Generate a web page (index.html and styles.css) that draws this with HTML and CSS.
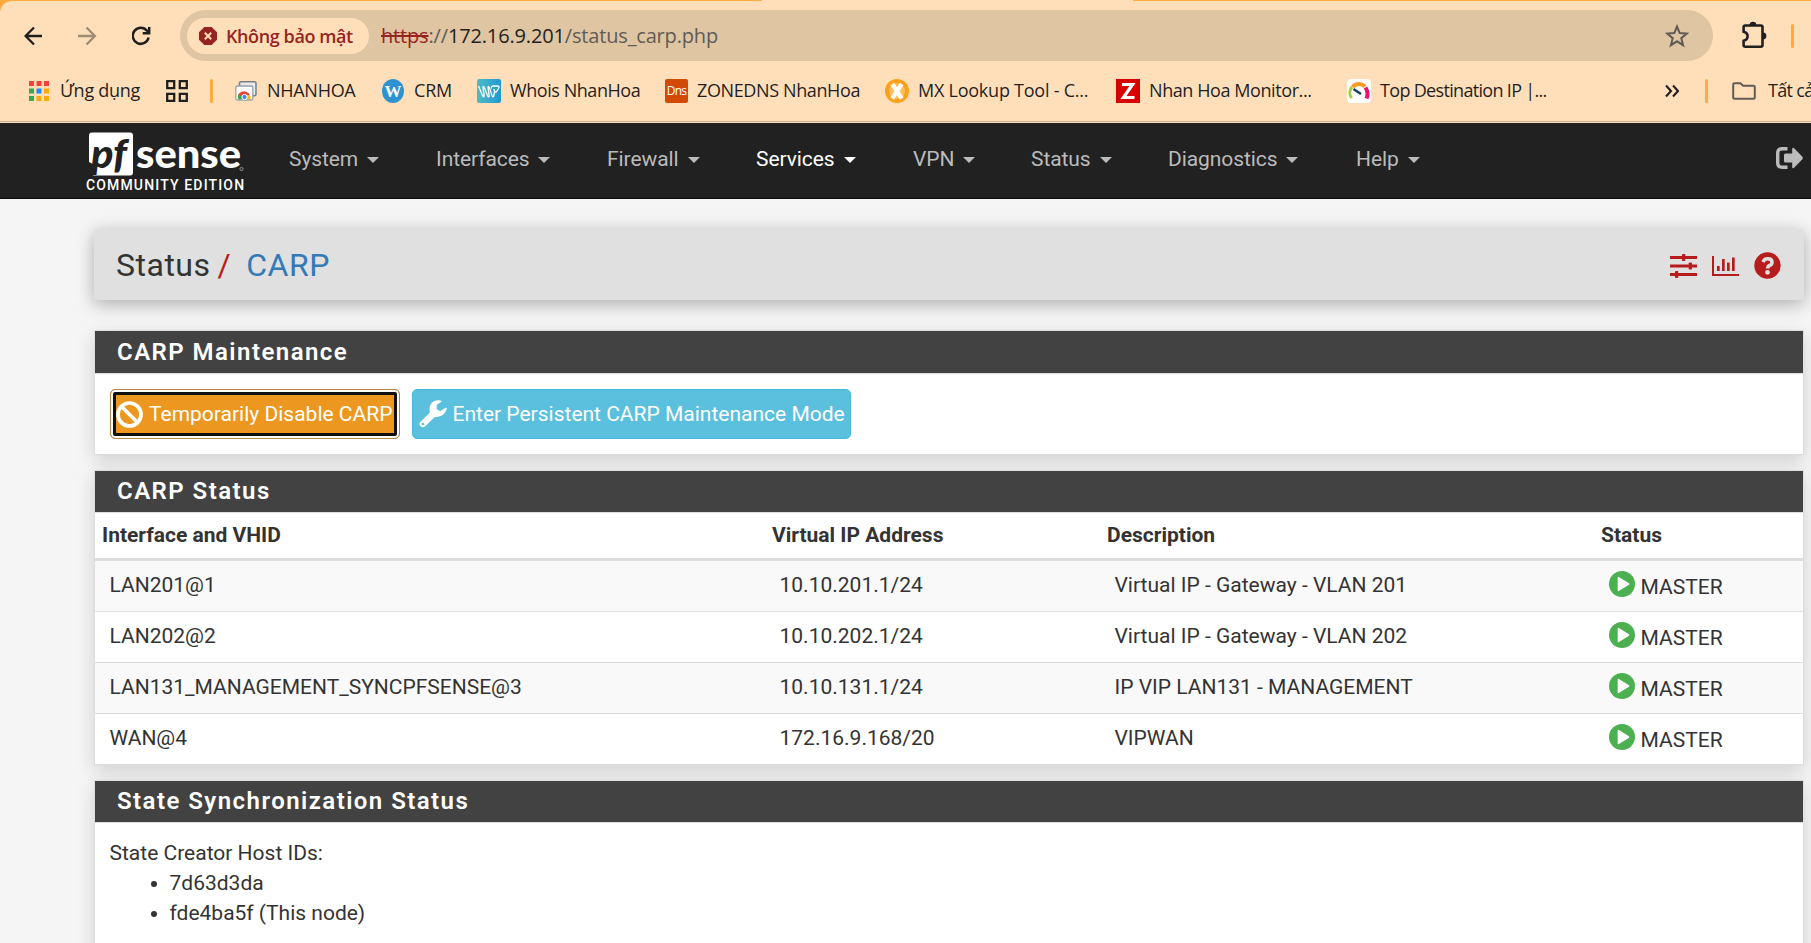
FILE: index.html
```html
<!DOCTYPE html>
<html lang="vi">
<head>
<meta charset="utf-8">
<title>Status: CARP</title>
<link rel="stylesheet" href="styles.css">
</head>
<body>
<svg class="defs" width="0" height="0">
  <symbol id="play" viewBox="0 0 26 26"><circle cx="13" cy="13" r="13" fill="#4caf50"/><path d="M8.7 6.3v13.4q.3.9 1.2.4L20 13.7q.7-.7 0-1.4L9.900 5.900q-.9-.5-1.200.4z" fill="#fff"/></symbol>
</svg>
<div class="tabedge"><div class="active-tab"></div></div>
<div class="chrome">
  <div class="toolbar">
    <svg class="tool" width="20" height="20" viewBox="0 0 20 20" fill="none" stroke="#1f1f1f" stroke-width="2.3"><path d="M18 10H2M10 1.500 1.600 10l8.400 8.500"/></svg>
    <svg class="tool" width="20" height="20" viewBox="0 0 20 20" fill="none" stroke="#9d8b75" stroke-width="2.3"><path d="M0 10h16M8.500 1.500 16.900 10l-8.400 8.500"/></svg>
    <svg class="tool" width="20" height="20" viewBox="0 0 20 20" fill="none" stroke="#1f1f1f" stroke-width="2.500"><path d="M16.600 11.500A8 8 0 1 1 15 4.800l1.700 1.900M17.200 1v6.200h-6.500"/></svg>
    <div class="omnibox">
      <div class="chip">
        <svg width="18" height="18" viewBox="0 0 18 18"><path d="M5.300 0h7.400L18 5.300v7.400L12.700 18H5.300L0 12.700V5.300z" fill="#962421"/><path d="m5.800 5.800 6.400 6.400m0-6.400-6.400 6.400" stroke="#ffdfba" stroke-width="2"/></svg>
        <span>Không bảo mật</span>
      </div>
      <div class="url"><s>https</s>://<b>172.16.9.201</b>/status_carp.php</div>
      <svg class="star" width="24" height="24" viewBox="0 0 24 24" fill="none" stroke="#5f5b56" stroke-width="2"><path d="m12 2.500 2.700 6.600 7.100.5-5.500 4.600 1.800 7-6.100-3.900-6.100 3.900 1.800-7-5.500-4.600 7.100-.5z"/></svg>
    </div>
    <svg class="puzzle" width="26" height="28" viewBox="0 0 26 28"><path d="M3.500 4.500h16.300q1.700 0 1.700 1.700V24q0 1.700-1.700 1.700H4.300q-1.700 0-1.700-1.700v-4.200q4-1 4-4.500t-4-4.500V6.200q0-1.700 1.700-1.700z" fill="none" stroke="#1f1f1f" stroke-width="2.600"/><path d="M8.700 4a3.300 3.300 0 0 1 6.600 0zM22 11.500a3.400 3.400 0 0 1 0 6.800z" fill="#1f1f1f"/></svg>
    <i class="sep"></i>
  </div>
  <div class="bookmarks">
    <div class="bm g11"><svg width="20" height="20" viewBox="0 0 20 20"><path d="M0 0h5v5H0zM7.500 0h5v5h-5zM15 0h5v5h-5z" fill="#f44336"/><path d="M0 7.500h5v5H0zM0 15h5v5H0z" fill="#34a853"/><path d="M7.500 7.500h5v5h-5z" fill="#1e88f5"/><path d="M15 7.500h5v5h-5zM7.500 15h5v5h-5zM15 15h5v5h-5z" fill="#fbab09"/></svg><span class="t0">Ứng dụng</span></div>
    <div class="bm"><svg width="22" height="22" viewBox="0 0 22 22" fill="none" stroke="#1f1f1f" stroke-width="2.300"><path d="M1.200 1.200h7v7h-7zM13.800 1.200h7v7h-7zM1.200 13.800h7v7h-7zM13.800 13.800h7v7h-7z"/></svg></div>
    <i class="sep"></i>
    <div class="bm g10"><svg width="22" height="20" viewBox="0 0 22 20"><rect x="4.500" y=".8" width="16.500" height="14" rx="1.500" fill="#e8eaed" stroke="#7d8187" stroke-width="1.600"/><rect x=".8" y="5" width="17" height="14" rx="1.500" fill="#fff" stroke="#9aa0a6" stroke-width="1.300"/><path d="M3.200 18.300a6.300 6.300 0 0 1 3.300-7.500q3.500-1.500 7 1.200l1.500 2.500H9.300z" fill="#ea4335"/><path d="M3.200 18.300q-.8-3 .8-5.500l4.500 5.500z" fill="#34a853"/><path d="M11 18.300 12 14.500h3q1 2 .4 3.800z" fill="#fbbc05"/><circle cx="9.500" cy="16" r="2.600" fill="#4285f4" stroke="#fff"/></svg><span class="t1">NHANHOA</span></div>
    <div class="bm g10"><svg width="22" height="24" viewBox="0 0 22 24"><ellipse cx="11" cy="12" rx="11" ry="12" fill="#2f92d0"/><text x="11" y="18" text-anchor="middle" class="w-mark" fill="#fff">W</text></svg><span class="t2">CRM</span></div>
    <div class="bm g9"><svg width="24" height="24" viewBox="0 0 24 24"><defs><linearGradient id="wg"><stop offset="0" stop-color="#4dbcc3"/><stop offset="1" stop-color="#1f98d3"/></linearGradient></defs><rect width="24" height="24" rx="2" fill="url(#wg)"/><path d="M1.500 7 5.500 16.500q1.200 2.500 1.700.5L6 8.500q0-2 1.300 0L10.500 16.500q1.200 2.500 1.700.5L11 8.500q0-2 1.300 0L15 16.500q1.200 2.500 1.700.5L17.500 13M14.500 9.500Q14 7 16.500 7h4q2.500 0 1 2.500l-2 3q-1.300 1.500-2-.5l-.7-2" fill="none" stroke="#fff" stroke-width="1.300"/></svg><span class="t3">Whois NhanHoa</span></div>
    <div class="bm g9"><span class="dns">Dns</span><span class="t4">ZONEDNS NhanHoa</span></div>
    <div class="bm g9"><svg width="24" height="24" viewBox="0 0 24 24"><circle cx="12" cy="12" r="12" fill="#f9a11b"/><circle cx="12" cy="12" r="8" fill="#ffbe55"/><path d="m7.200 5 9.600 14.500m0-14.500L7.200 19.500" stroke="#fff" stroke-width="4.200"/></svg><span class="t5">MX Lookup Tool - C...</span></div>
    <div class="bm g9"><svg width="24" height="24" viewBox="0 0 24 24"><path fill="#d80000" d="M0 0h24v24H0z"/><path d="M6 5.500h10.500L7.500 18.500h11" fill="none" stroke="#fff" stroke-width="3.200"/></svg><span class="t6">Nhan Hoa Monitor...</span></div>
    <div class="bm g9"><svg width="24" height="24" viewBox="0 0 24 24" fill="none" stroke-width="4"><rect width="24" height="24" rx="4" fill="#fff"/><path d="M4.500 19A9 9 0 0 1 5 8" stroke="#a5cf37" stroke-width="3"/><path d="M5.500 8a8.500 8.500 0 0 1 12.500-.5" stroke="#fa9a28"/><path d="M18.500 8.500q3.500 5.500 1 11" stroke="#ee0f6b"/><path d="m6.500 10 7.500 5" stroke="#1c3f66" stroke-width="2.600"/></svg><span class="t7">Top Destination IP |...</span></div>
    <div class="bm"><svg width="14" height="14" viewBox="0 0 14 14" fill="none" stroke="#1f1f1f" stroke-width="2.100"><path d="m1 1.500 5 5.500-5 5.500M8 1.500 13 7l-5 5.500"/></svg></div>
    <i class="sep"></i>
    <div class="bm folder"><svg width="24" height="18" viewBox="0 0 24 18" fill="none" stroke="#5f5b56" stroke-width="2"><path d="M1.200 2.500q0-1.300 1.300-1.300h6l2.500 2.600h10.500q1.300 0 1.300 1.300v10.400q0 1.300-1.300 1.300h-19q-1.300 0-1.300-1.300z"/></svg><span class="t8">Tất cả</span></div>
  </div>
</div>
<nav class="navbar">
  <div class="brand">
    <svg width="158" height="46" viewBox="0 0 158 46"><path d="M6 .5h38q3 0 3 3v37q0 3-3 3H7l2.500-10L3 30V3.500q0-3 3-3z" fill="#fff"/><text x="5" y="36" class="pf" textLength="36" lengthAdjust="spacingAndGlyphs">pf</text><text x="50" y="36" class="sense" textLength="105" lengthAdjust="spacingAndGlyphs">sense</text><circle cx="155.500" cy="37" r="1.600" fill="none" stroke="#aaa" stroke-width=".8"/></svg>
    <div class="edition">COMMUNITY EDITION</div>
  </div>
  <div class="menu">
    <a>System<i></i></a><a>Interfaces<i></i></a><a>Firewall<i></i></a><a class="on">Services<i></i></a><a>VPN<i></i></a><a>Status<i></i></a><a>Diagnostics<i></i></a><a>Help<i></i></a>
  </div>
  <svg class="logout" width="28" height="22" viewBox="0 0 28 22"><path d="M11.500 1.700H6.200Q1.700 1.700 1.700 6.200v9.600q0 4.500 4.500 4.500h5.300" fill="none" stroke="#bbb" stroke-width="3.400"/><path d="M8 8q0-1.500 1.500-1.500h6.700V2q0-2 1.700-.9l8.500 8.700q.9 1.200 0 2.400l-8.500 8.700q-1.700 1.100-1.700-.9v-4.500H9.500Q8 15.500 8 14z" fill="#bbb"/></svg>
</nav>
<main>
  <header class="crumb">
    <h1>Status<em>/</em><a>CARP</a></h1>
    <div class="tools">
      <svg width="27" height="24" viewBox="0 0 27 24" fill="#b71c1c"><path d="M0 2h27v3H0zM0 10.500h27v3H0zM0 19h27v3H0z"/><rect x="12" width="3.300" height="7" rx=".8"/><rect x="18.700" y="8.500" width="3.300" height="7" rx=".8"/><rect x="5" y="17" width="3.300" height="7" rx=".8"/></svg>
      <svg width="27" height="20" viewBox="0 0 27 20" fill="#b71c1c"><path d="M0 0h2v18h25v2H0zM5 10h2.700v5H5zM10 3h2.700v12H10zM15 6.500h2.700V15H15zM20 1.500h2.700V15H20z"/></svg>
      <svg width="27" height="27" viewBox="0 0 27 27"><circle cx="13.500" cy="13.500" r="13.200" fill="#b71c1c"/><path d="M9 10q1.300-3.300 4.700-3.300 4.300 0 4.300 3.500 0 2.200-2.300 3.200-2 .9-2 3" fill="none" stroke="#e0e0e0" stroke-width="3.600"/><circle cx="13.500" cy="20.300" r="2.400" fill="#e0e0e0"/></svg>
    </div>
  </header>
  <section class="panel first">
    <h2>CARP Maintenance</h2>
    <div class="actions">
      <button class="btn warn"><svg width="27" height="27" viewBox="0 0 27 27" fill="none" stroke="#fff" stroke-width="3.700"><circle cx="13.500" cy="13.500" r="11.500"/><path d="m5.500 5.500 16 16"/></svg><span>Temporarily Disable CARP</span></button>
      <button class="btn info"><svg width="28" height="28" viewBox="0 0 28 28"><path d="M15.500 17.300 6 26.500q-2 1.600-4 0-3-2-.7-4.600L11 12.500Q8.800 4.500 15.500 1q4-1.600 6.800-.2l.2 1-4.700 3-.2 4.200 3.600 2.200 5.300-3.500q1.300-.3 1.300 1-1.800 8-12.300 8.600z" fill="#fff"/><circle cx="4" cy="24" r="1.300" fill="#5bc0de"/></svg><span>Enter Persistent CARP Maintenance Mode</span></button>
    </div>
  </section>
  <section class="panel">
    <h2>CARP Status</h2>
    <table>
      <thead><tr><th class="c1">Interface and VHID</th><th class="c2">Virtual IP Address</th><th class="c3">Description</th><th>Status</th></tr></thead>
      <tbody>
        <tr><td>LAN201@1</td><td>10.10.201.1/24</td><td>Virtual IP - Gateway - VLAN 201</td><td><div class="state"><svg><use href="#play"/></svg><span>MASTER</span></div></td></tr>
        <tr><td>LAN202@2</td><td>10.10.202.1/24</td><td>Virtual IP - Gateway - VLAN 202</td><td><div class="state"><svg><use href="#play"/></svg><span>MASTER</span></div></td></tr>
        <tr><td>LAN131_MANAGEMENT_SYNCPFSENSE@3</td><td>10.10.131.1/24</td><td>IP VIP LAN131 - MANAGEMENT</td><td><div class="state"><svg><use href="#play"/></svg><span>MASTER</span></div></td></tr>
        <tr><td>WAN@4</td><td>172.16.9.168/20</td><td>VIPWAN</td><td><div class="state"><svg><use href="#play"/></svg><span>MASTER</span></div></td></tr>
      </tbody>
    </table>
  </section>
  <section class="panel last">
    <h2>State Synchronization Status</h2>
    <div class="hosts">State Creator Host IDs:
      <ul><li>7d63d3da</li><li>fde4ba5f (This node)</li></ul>
    </div>
  </section>
</main>
</body>
</html>
```
FILE: styles.css
```css
* { box-sizing: border-box; }
html, body { height: 943px; overflow: hidden; }
html { background: #ffab40; }
body { margin: 0; color: #333; font: 21px/30px Roboto, sans-serif; display: flex; flex-direction: column; }
svg { display: block; flex: none; }
.defs { position: absolute; }

/* browser chrome */
.tabedge { height: 1px; flex: none; }
.active-tab { width: 371px; height: 1px; margin-left: 762px; background: #ffdfba; }
.chrome { height: 122px; flex: none; background: #ffdfba; border-bottom: 1px solid #ffdfba; box-shadow: inset 0 -1px #c9b090; font-family: "Open Sans", "Noto Sans", sans-serif; color: #1f1f1f; border-top-left-radius: 12px; overflow: hidden; }
.toolbar { height: 60px; padding: 9px 0 0 24px; display: flex; }
.tool { margin: 16px 34px 0 0; }
.tool:nth-child(3) { margin-right: 28px; }
.omnibox { width: 1533px; height: 51px; flex: none; border-radius: 26px; background: #dfc5a2; display: flex; align-items: center; padding: 0 24px 0 7px; }
.chip { width: 182px; height: 36px; border-radius: 18px; background: #ffdfba; display: flex; align-items: center; padding-left: 12px; gap: 9px; color: #962421; font-size: 18px; font-weight: 600; letter-spacing: -.4px; white-space: nowrap; }
.url { margin-left: 12px; font-size: 20px; line-height: 28px; color: #5f5b56; white-space: nowrap; letter-spacing: -.16px; }
.url s { color: #962421; }
.url b { color: #1f1f1f; font-weight: 400; }
.star { margin-left: auto; }
.puzzle { margin: 11px 0 0 28px; }
.sep { display: block; width: 3px; height: 24px; background: #ffab40; border-radius: 2px; }
.toolbar .sep { margin: 14px 0 0 24px; }
.bookmarks { height: 60px; display: grid; align-items: center; padding-left: 29px; grid-template-columns: 137px 44px 25px 147px 95px 188px 220px 231px 231px 318px 40px 27px 79px; font-size: 18px; }
.bm { display: flex; align-items: center; white-space: nowrap; gap: 9px; }
.bm span[class^="t"] { padding-bottom: 2px; }
.bm.g11 { gap: 11px; }
.bm.g10 { gap: 10px; }
.bm.folder { gap: 12px; }
.t0, .t1 { letter-spacing: -.28px; }
.t2 { letter-spacing: -.2px; }
.t3 { letter-spacing: -.44px; }
.t4 { letter-spacing: -.38px; }
.t5 { letter-spacing: -.24px; }
.t6 { letter-spacing: -.42px; }
.t7 { letter-spacing: -.68px; }
.t8 { letter-spacing: -.7px; }
.dns { width: 23px; height: 24px; background: #d24a05; border-radius: 2px; color: #fff; font-size: 12px; line-height: 24px; text-align: center; letter-spacing: -.7px; }
.w-mark { font: bold 17px "Liberation Serif", serif; }

/* top navigation */
.navbar { height: 76px; flex: none; background: #212121; border-bottom: 1px solid #080808; display: flex; padding-left: 86px; color: #bbb; }
.brand { width: 203px; padding-top: 9px; color: #fff; }
.pf { font: italic 900 40px Lato, sans-serif; fill: #212121; }
.sense { font: 900 40px Lato, sans-serif; fill: #fff; }
.edition { font-size: 14px; line-height: 16px; margin-top: -1px; font-weight: 500; letter-spacing: 1.150px; white-space: nowrap; }
.menu { width: 1487px; display: grid; grid-template-columns: 147px 171px 149px 157px 118px 137px 188px 100px; height: 71px; align-items: center; }
.menu a { display: flex; align-items: center; gap: 9px; letter-spacing: -.08px; }
.menu i { border: 6px solid transparent; border-top-color: currentColor; border-bottom: 0; margin-top: 3px; }
.menu .on { color: #fff; }
.logout { margin-top: 24px; }

/* page */
main { flex: 1; padding: 30px 7px 0 94px; background: #f5f5f5; min-height: 0; }
.crumb { height: 71px; background: #e0e0e0; border-radius: 3px; box-shadow: 0 4px 18px rgba(0,0,0,.3); display: flex; justify-content: space-between; align-items: center; padding: 0 23px 0 22px; }
h1 { margin: 1px 0 0; font-size: 32px; font-weight: 400; line-height: 36px; display: flex; letter-spacing: .5px; }
h1 em { font-style: normal; color: #b71c1c; margin: 0 15px 0 7px; }
h1 a { color: #337ab7; }
.tools { display: flex; align-items: center; gap: 15px; padding-top: 2px; }
.panel { background: #fff; border: 1px solid #ddd; margin-bottom: 15px; box-shadow: 0 6px 18px rgba(0,0,0,.15); }
.first { margin-top: 30px; }
h2 { margin: 0; height: 42px; padding-left: 22px; background: #424242; border-bottom: 1px solid #ddd; color: #fff; font-size: 24px; line-height: 40px; font-weight: 600; letter-spacing: 1.450px; }
.first h2 { height: 43px; line-height: 42px; }
.actions { height: 80px; padding: 15px; display: flex; gap: 12px; }
.btn { height: 50px; margin: 0; border: 1px solid; border-radius: 5px; color: #fff; font: 21px/30px Roboto, sans-serif; display: flex; align-items: center; padding: 0 6px; white-space: nowrap; }
.warn { width: 290px; border-color: #b58743; background: #ec971f; box-shadow: inset 0 0 0 2px #fff, inset 0 0 0 5px #101010; gap: 6px; padding: 0 5px; }
.info { width: 439px; border-color: #46b8da; background: #5bc0de; gap: 5.500px; }
table { width: 100%; border-collapse: separate; border-spacing: 0; table-layout: fixed; }
th { height: 48px; padding: 0 7px 1px; border-bottom: 3px solid #ddd; text-align: left; font-weight: 700; }
.c1 { width: 670px; }
.c2 { width: 335px; }
.c3 { width: 494px; }
td { height: 51px; padding: 0 14.500px 2px; white-space: nowrap; border-bottom: 1px solid #ddd; }
tr:last-child td { height: 50px; border-bottom: 0; }
tbody tr:nth-child(odd) { background: #f9f9f9; }
.state { display: flex; align-items: center; gap: 6px; padding-bottom: 2px; }
.state svg { width: 26px; height: 26px; }
.state span { padding-top: 3px; margin-bottom: -2px; }
.last { height: 200px; }
.hosts { padding: 15px 14.500px; }
ul { margin: 0; padding-left: 60px; }
```
